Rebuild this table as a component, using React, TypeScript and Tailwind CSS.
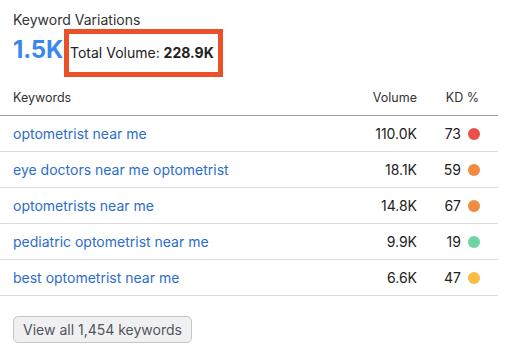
import React from "react"

type Row = { keyword: string; volume: string; kd: number; dot: string }

const rows: Row[] = [
  { keyword: "optometrist near me", volume: "110.0K", kd: 73, dot: "bg-[#ec4f4b]" },
  { keyword: "eye doctors near me optometrist", volume: "18.1K", kd: 59, dot: "bg-[#f08b42]" },
  { keyword: "optometrists near me", volume: "14.8K", kd: 67, dot: "bg-[#f08b42]" },
  { keyword: "pediatric optometrist near me", volume: "9.9K", kd: 19, dot: "bg-[#6fd4a1]" },
  { keyword: "best optometrist near me", volume: "6.6K", kd: 47, dot: "bg-[#f5bd42]" },
]

export default function App() {
  return (
    <div className="w-[526px] h-[360px] bg-white font-['Inter',sans-serif] text-[#333]">
      <div className="w-[498px]">
        <div className="pl-[13px] pt-[10px] text-[14px] leading-[19px] text-[#333]">Keyword Variations</div>

        <div className="flex items-baseline pl-[13px]">
          <span className="text-[24px] leading-[28px] font-bold text-[#3a87ef] tracking-[-0.2px]">1.5K</span>
          <div className="ml-[1px] border-[5px] border-[#ea5128] pl-[1px] pr-[4px] py-[10px] text-[14px] leading-[18px] text-[#222]">
            Total Volume: <span className="font-bold">228.9K</span>
          </div>
        </div>

        <div className="mt-[12px] flex items-center pb-[8px] border-b border-[#9d9da3] text-[12.5px] leading-[18px] text-[#333]">
          <div className="flex-1 pl-[13px]">Keywords</div>
          <div className="w-[100px] text-right">Volume</div>
          <div className="w-[63px] text-right pr-[1px] mr-[18px]">KD %</div>
        </div>

        {rows.map((r) => (
          <div key={r.keyword} className="flex items-center h-[36px] border-b border-[#dcdce1] text-[14px]">
            <div className="flex-1 pl-[13px] text-[#2c6dcc]">{r.keyword}</div>
            <div className="w-[100px] text-right text-[#222]">{r.volume}</div>
            <div className="w-[63px] mr-[18px] flex items-center justify-end gap-[7px] text-[#222]">
              <span>{r.kd}</span>
              <span className={`w-[12px] h-[12px] rounded-full ${r.dot}`} />
            </div>
          </div>
        ))}

        <div className="pl-[13px] mt-[20px]">
          <button className="h-[27px] w-[179px] rounded-[5px] border border-[#c6c6cb] bg-[#f0f0f3] text-[14px] text-[#52565e]">
            View all 1,454 keywords
          </button>
        </div>
      </div>
    </div>
  )
}
